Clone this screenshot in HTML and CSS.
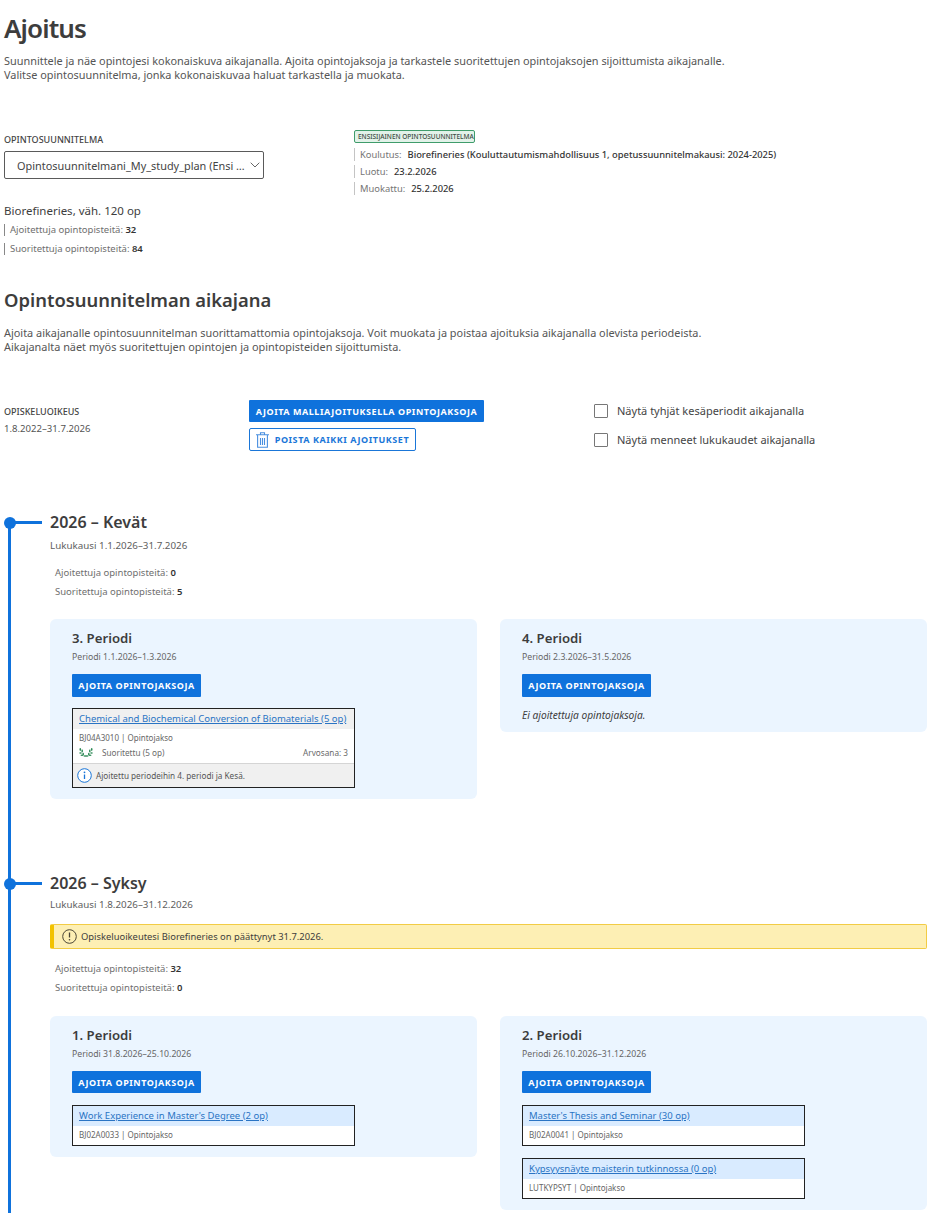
FILE: index.html
```html
<!DOCTYPE html>
<html lang="fi">
<head>
<meta charset="utf-8">
<title>Ajoitus</title>
<link rel="stylesheet" href="styles.css">
</head>
<body>
<main class="page">
  <h1 class="title">Ajoitus</h1>
  <p class="lead">Suunnittele ja näe opintojesi kokonaiskuva aikajanalla. Ajoita opintojaksoja ja tarkastele suoritettujen opintojaksojen sijoittumista aikajanalle.<br>Valitse opintosuunnitelma, jonka kokonaiskuvaa haluat tarkastella ja muokata.</p>

  <section class="plan">
    <div class="plan-select">
      <div class="label">OPINTOSUUNNITELMA</div>
      <div class="select"><span class="select-text">Opintosuunnitelmani_My_study_plan (Ensi …</span>
        <svg class="chev" width="10" height="6" viewBox="0 0 10 6"><path d="M.7.7 5 5 9.3.7" fill="none" stroke="#666" stroke-width="1"/></svg>
      </div>
    </div>
    <div class="plan-info">
      <span class="tag">ENSISIJAINEN OPINTOSUUNNITELMA</span>
      <div class="info-row"><span class="muted">Koulutus:</span><b>Biorefineries (Kouluttautumismahdollisuus 1, opetussuunnitelmakausi: 2024-2025)</b></div>
      <div class="info-row"><span class="muted">Luotu:</span><b>23.2.2026</b></div>
      <div class="info-row"><span class="muted">Muokattu:</span><b>25.2.2026</b></div>
    </div>
  </section>

  <section class="totals">
    <div class="totals-title">Biorefineries, väh. 120 op</div>
    <div class="total-row">Ajoitettuja opintopisteitä: <b>32</b></div>
    <div class="total-row">Suoritettuja opintopisteitä: <b>84</b></div>
  </section>

  <h2 class="subtitle">Opintosuunnitelman aikajana</h2>
  <p class="lead lead-2">Ajoita aikajanalle opintosuunnitelman suorittamattomia opintojaksoja. Voit muokata ja poistaa ajoituksia aikajanalla olevista periodeista.<br>Aikajanalta näet myös suoritettujen opintojen ja opintopisteiden sijoittumista.</p>

  <section class="controls">
    <div class="right-col">
      <div class="label">OPISKELUOIKEUS</div>
      <div class="right-date">1.8.2022–31.7.2026</div>
    </div>
    <div class="actions">
      <button class="btn btn-wide">AJOITA MALLIAJOITUKSELLA OPINTOJAKSOJA</button>
      <button class="btn btn-outline">
        <svg width="13" height="16" viewBox="0 0 13 16" fill="none" stroke="#4a90e0" stroke-width="1.100"><path d="M0 2.800h13M4.500 2.600V.8h4v1.800M1.600 3v12.200h9.800V3M4.500 6v7M6.500 6v7M8.500 6v7"/></svg>
        POISTA KAIKKI AJOITUKSET
      </button>
    </div>
    <div class="checks">
      <label class="check"><span class="box"></span>Näytä tyhjät kesäperiodit aikajanalla</label>
      <label class="check"><span class="box"></span>Näytä menneet lukukaudet aikajanalla</label>
    </div>
  </section>

  <section class="timeline">
    <article class="term term-spring">
      <h3 class="term-title">2026 – Kevät</h3>
      <div class="term-date">Lukukausi 1.1.2026–31.7.2026</div>
      <div class="term-stat">Ajoitettuja opintopisteitä: <b>0</b></div>
      <div class="term-stat">Suoritettuja opintopisteitä: <b>5</b></div>
      <div class="periods">
        <div class="period">
          <h4 class="period-title">3. Periodi</h4>
          <div class="period-date">Periodi 1.1.2026–1.3.2026</div>
          <button class="btn btn-period">AJOITA OPINTOJAKSOJA</button>
          <div class="course">
            <div class="course-head course-head-done"><a href="#">Chemical and Biochemical Conversion of Biomaterials (5 op)</a></div>
            <div class="course-meta">BJ04A3010 | Opintojakso</div>
            <div class="course-done">
              <svg class="laurel" width="14" height="9" viewBox="0 0 14 9" fill="#2e8b57"><ellipse cx="1.300" cy="1.500" rx=".8" ry="1.400"/><ellipse cx="3.200" cy="3" rx=".8" ry="1.400"/><ellipse cx="1.500" cy="5" rx="1.300" ry=".8"/><ellipse cx="4.200" cy="6" rx=".8" ry="1.300"/><ellipse cx="3" cy="7.300" rx="1.500" ry=".8"/><ellipse cx="6" cy="8" rx="1.500" ry=".7"/><ellipse cx="12.700" cy="1.500" rx=".8" ry="1.400"/><ellipse cx="10.800" cy="3" rx=".8" ry="1.400"/><ellipse cx="12.500" cy="5" rx="1.300" ry=".8"/><ellipse cx="9.800" cy="6" rx=".8" ry="1.300"/><ellipse cx="11" cy="7.300" rx="1.500" ry=".8"/><ellipse cx="8" cy="8" rx="1.500" ry=".7"/></svg>
              <span class="done-text">Suoritettu (5 op)</span><span class="grade">Arvosana: 3</span>
            </div>
            <div class="course-note">
              <svg width="15" height="15" viewBox="0 0 15 15"><circle cx="7.500" cy="7.500" r="6.800" fill="#fff" stroke="#1a76d8" stroke-width="1"/><path d="M7.500 6.500v4.500" stroke="#1a76d8" stroke-width="1.300"/><circle cx="7.500" cy="4.300" r=".9" fill="#1a76d8"/></svg>
              Ajoitettu periodeihin 4. periodi ja Kesä.
            </div>
          </div>
        </div>
        <div class="period">
          <h4 class="period-title">4. Periodi</h4>
          <div class="period-date">Periodi 2.3.2026–31.5.2026</div>
          <button class="btn btn-period">AJOITA OPINTOJAKSOJA</button>
          <div class="empty">Ei ajoitettuja opintojaksoja.</div>
        </div>
      </div>
    </article>

    <article class="term term-autumn">
      <h3 class="term-title">2026 – Syksy</h3>
      <div class="term-date">Lukukausi 1.8.2026–31.12.2026</div>
      <div class="alert">
        <svg width="15" height="15" viewBox="0 0 15 15"><circle cx="7.500" cy="7.500" r="6.800" fill="none" stroke="#4a4535" stroke-width="1"/><path d="M7.500 3.500v5" stroke="#4a4535" stroke-width="1.300"/><circle cx="7.500" cy="10.800" r=".8" fill="#4a4535"/></svg>
        Opiskeluoikeutesi Biorefineries on päättynyt 31.7.2026.
      </div>
      <div class="term-stat">Ajoitettuja opintopisteitä: <b>32</b></div>
      <div class="term-stat">Suoritettuja opintopisteitä: <b>0</b></div>
      <div class="periods">
        <div class="period">
          <h4 class="period-title">1. Periodi</h4>
          <div class="period-date">Periodi 31.8.2026–25.10.2026</div>
          <button class="btn btn-period">AJOITA OPINTOJAKSOJA</button>
          <div class="course">
            <div class="course-head"><a href="#">Work Experience in Master's Degree (2 op)</a></div>
            <div class="course-meta">BJ02A0033 | Opintojakso</div>
          </div>
        </div>
        <div class="period">
          <h4 class="period-title">2. Periodi</h4>
          <div class="period-date">Periodi 26.10.2026–31.12.2026</div>
          <button class="btn btn-period">AJOITA OPINTOJAKSOJA</button>
          <div class="course">
            <div class="course-head"><a href="#">Master's Thesis and Seminar (30 op)</a></div>
            <div class="course-meta">BJ02A0041 | Opintojakso</div>
          </div>
          <div class="course">
            <div class="course-head"><a href="#">Kypsyysnäyte maisterin tutkinnossa (0 op)</a></div>
            <div class="course-meta">LUTKYPSYT | Opintojakso</div>
          </div>
        </div>
      </div>
    </article>
  </section>
</main>
</body>
</html>
```
FILE: styles.css
```css
* { box-sizing: border-box; }
html, body { margin: 0; padding: 0; background: #fff; }
body { font-family: "Noto Sans", "Open Sans", sans-serif; color: #3d3d3d; font-size: 12px; }
.page { padding: 0 13px 0 4px; width: 940px; }
b { font-weight: 600; color: #333; }

.title { margin: 0; padding-top: 10px; font-size: 26px; line-height: 36px; font-weight: 600; letter-spacing: -.9px; color: #3d3d3d; }
.lead { margin: 8px 0 0; font-size: 10.900px; line-height: 14px; color: #555; }

.plan { display: flex; margin-top: 47px; }
.plan-select { width: 350px; padding-top: 5px; }
.label { font-size: 9px; line-height: 12px; font-weight: 500; color: #444; }
.select { display: flex; align-items: center; gap: 5px; width: 260px; height: 28px; margin-top: 5px; padding: 0 8px 0 12px; border: 1px solid #5a5a5a; border-radius: 2px; font-size: 10.900px; color: #444; white-space: nowrap; overflow: hidden; }
.chev { flex: none; }
.plan-info { padding-top: 1px; }
.tag { display: block; width: 121px; height: 13px; border: 1px solid #3f9c6b; border-radius: 2px; background: #e2f2e9; font-size: 6.500px; line-height: 11px; padding-left: 3px; color: #3d4d44; white-space: nowrap; overflow: hidden; font-weight: 500; }
.info-row { display: flex; gap: 6px; height: 13px; margin-top: 4px; border-left: 1px solid #c4c4c4; padding-left: 5px; font-size: 9.350px; line-height: 13px; white-space: nowrap; }
.tag + .info-row { margin-top: 5px; }
.info-row b { font-weight: 500; }
.muted { color: #757575; }

.totals { margin-top: 8px; }
.totals-title { font-size: 11.500px; line-height: 16px; color: #3d3d3d; }
.total-row { height: 12px; margin-top: 7px; padding-left: 5px; border-left: 1px solid #888; font-size: 9.500px; line-height: 12px; color: #6e6e6e; }
.totals-title + .total-row { margin-top: 5px; }

.subtitle { margin: 31px 0 0; font-size: 18.400px; line-height: 28px; font-weight: 600; color: #3d3d3d; }
.lead-2 { margin-top: 12px; }

.controls { display: flex; margin-top: 46px; }
.right-col { width: 245px; padding-top: 6px; }
.right-date { margin-top: 4px; font-size: 9.600px; line-height: 14px; color: #555; }
.actions { display: flex; flex-direction: column; align-items: flex-start; gap: 6px; width: 345px; }
.btn { display: block; border: 0; border-radius: 1px; background: #0f72dc; color: #fff; font-family: inherit; font-size: 9px; font-weight: 700; letter-spacing: .55px; white-space: nowrap; padding: 0; }
.btn-wide { width: 235px; height: 22px; }
.btn-outline { display: flex; align-items: center; justify-content: center; gap: 6px; width: 167px; height: 23px; background: #fff; color: #1a76d8; border: 1px solid #1a76d8; border-radius: 2px; }
.checks { display: flex; flex-direction: column; gap: 14px; padding-top: 3px; }
.check { display: flex; align-items: center; gap: 9px; height: 15px; font-size: 11px; color: #444; }
.box { width: 14px; height: 14px; border: 1px solid #777; border-radius: 1px; background: #fff; }

.timeline { position: relative; margin-top: 60px; padding: 0 0 3px 46px; }
.timeline::before { content: ""; position: absolute; left: 4px; top: 11px; bottom: 0; width: 3px; background: #0f72dc; }
.term { position: relative; }
.term::before { content: ""; position: absolute; left: -46px; top: 5.500px; width: 12px; height: 12px; border-radius: 50%; background: #0f72dc; }
.term::after { content: ""; position: absolute; left: -40px; top: 10px; width: 32px; height: 3px; background: #0f72dc; }
.term-autumn { margin-top: 73px; }
.term-title { margin: 0; font-size: 16px; line-height: 22px; font-weight: 600; color: #3d3d3d; }
.term-date { margin-top: 6px; font-size: 9.800px; line-height: 14px; color: #5e5e5e; }
.term-autumn .term-date { margin-top: 4px; }
.term-stat { margin-top: 7px; padding-left: 5px; font-size: 9.500px; line-height: 12px; color: #6e6e6e; }
.term-date + .term-stat { margin-top: 14px; }
.alert { display: flex; align-items: center; gap: 4px; height: 25px; margin-top: 12px; margin-bottom: 14px; padding-left: 8px; background: #fdefb4; border: 1px solid #f2cc45; border-left: 4px solid #f2c200; border-radius: 2px; font-size: 9.400px; color: #3d3d3d; }
.alert + .term-stat { margin-top: 0; }
.periods { display: grid; grid-template-columns: 427px 427px; gap: 23px; align-items: start; margin-top: 21px; }
.term-autumn .periods { margin-top: 22px; }
.period { padding: 9px 22px 11px; border-radius: 6px; background: #ebf5ff; }
.period-title { margin: 0; font-size: 13.200px; line-height: 21px; font-weight: 600; color: #3d3d3d; }
.period-date { margin-top: 2px; font-size: 8.700px; line-height: 12px; color: #666; }
.btn-period { width: 129px; height: 23px; margin-top: 11px; }
.term-autumn .btn-period { height: 22px; }
.course { width: 283px; margin-top: 11px; border: 1px solid #222; background: #fff; }
.term-autumn .course { margin-top: 12px; }
.course-head { height: 20px; padding-left: 6px; background: #d9ebff; font-size: 9.500px; line-height: 20px; white-space: nowrap; }
.course-head-done { background: #f0f0f0; }
.course-head a { color: #2a74c4; text-decoration: underline; }
.course-meta { padding: 3px 6px 0; height: 19px; font-size: 8px; line-height: 11px; color: #666; }
.course-done { display: flex; align-items: center; height: 13px; margin-top: -2px; margin-bottom: 4px; padding: 0 6px; font-size: 8.200px; color: #6a6a6a; }
.laurel { flex: none; }
.done-text { margin-left: 9px; flex: 1; }
.course-note { display: flex; align-items: center; gap: 4px; height: 24px; padding-left: 4px; background: #f0f0f0; border-top: 1px solid #d5d5d5; font-size: 8.200px; color: #555; }
.empty { margin-top: 12px; font-size: 10.200px; font-style: italic; line-height: 12px; color: #3d3d3d; }
```
